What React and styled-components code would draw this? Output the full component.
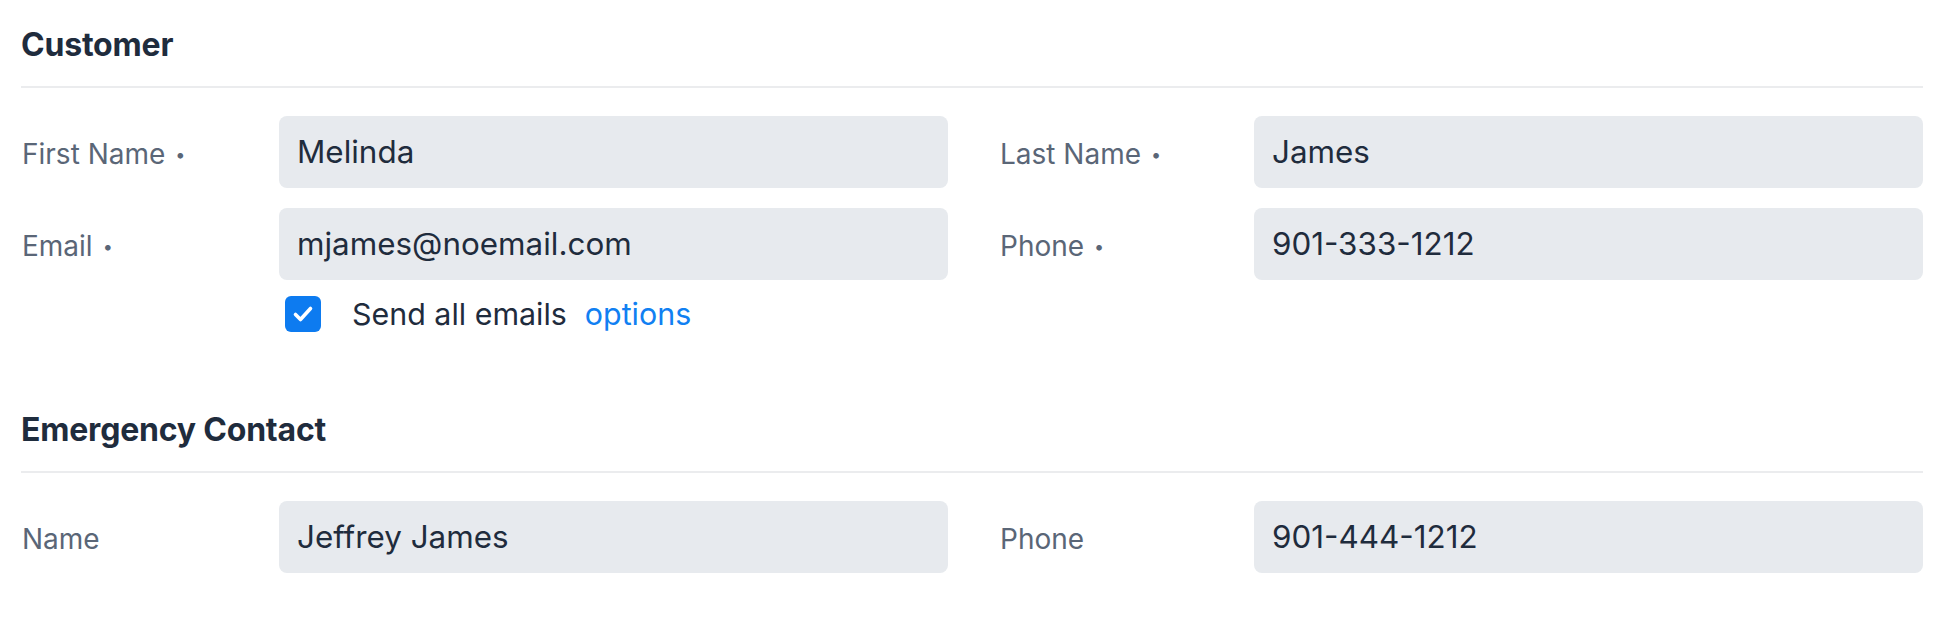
import React from "react";
import styled, { createGlobalStyle } from "styled-components";

const GlobalStyle = createGlobalStyle`
  html, body {
    margin: 0;
    padding: 0;
    background: #ffffff;
  }
  body {
    font-family: Inter, "Noto Sans", "Liberation Sans", sans-serif;
    -webkit-font-smoothing: antialiased;
  }
`;

const Page = styled.div`
  width: 1940px;
  height: 618px;
  box-sizing: border-box;
  padding: 25px 17px 0 21px;
  display: flex;
  flex-direction: column;
  gap: 78px;
  overflow: hidden;
`;

const Section = styled.section`
  display: flex;
  flex-direction: column;
`;

const Heading = styled.h2`
  margin: 0;
  font-size: 32px;
  line-height: 40px;
  font-weight: 700;
  color: #1f2c3d;
  letter-spacing: -0.2px;
`;

const Divider = styled.hr`
  margin: 21px 0 28px;
  border: none;
  height: 2px;
  background: #ebecee;
`;

const Rows = styled.div`
  display: flex;
  flex-direction: column;
  gap: 20px;
`;

const Row = styled.div`
  display: grid;
  grid-template-columns: 927fr 924fr;
  column-gap: 51px;
`;

const Field = styled.div`
  display: flex;
  align-items: center;
  min-width: 0;
`;

const Label = styled.label`
  flex: 0 0 ${(p) => p.$w || 258}px;
  box-sizing: border-box;
  font-size: 28px;
  line-height: 34px;
  padding-top: 4px;
  color: #5a6677;
  white-space: nowrap;
  padding-left: 1px;
`;

const Req = styled.span`
  display: inline-block;
  margin-left: 10px;
  font-size: 18px;
  vertical-align: 3px;
`;

const Input = styled.input`
  flex: 1 1 auto;
  min-width: 0;
  height: 72px;
  box-sizing: border-box;
  border: none;
  outline: none;
  border-radius: 8px;
  background: #e7eaee;
  padding: 0 18px;
  font-family: inherit;
  font-size: 31.4px;
  color: #1f2c3d;
`;

const OptionRow = styled.div`
  display: flex;
  align-items: center;
  margin-top: -4px;
  padding-left: 264px;
  height: 36px;
`;

const Check = styled.span`
  width: 36px;
  height: 36px;
  border-radius: 6px;
  background: #0d7bf0;
  display: flex;
  align-items: center;
  justify-content: center;
  flex-shrink: 0;
`;

const OptionText = styled.span`
  margin-left: 31px;
  font-size: 30.4px;
  line-height: 36px;
  color: #1f2c3d;
`;

const OptionLink = styled.a`
  margin-left: 18px;
  font-size: 30.4px;
  line-height: 36px;
  color: #1180f2;
  text-decoration: none;
  cursor: pointer;
`;

function Required() {
  return <Req>•</Req>;
}

export default function App() {
  return (
    <>
      <GlobalStyle />
      <Page>
        <Section>
          <Heading>Customer</Heading>
          <Divider />
          <Rows>
            <Row>
              <Field>
                <Label>First Name<Required /></Label>
                <Input readOnly value="Melinda" />
              </Field>
              <Field>
                <Label $w={255}>Last Name<Required /></Label>
                <Input readOnly value="James" />
              </Field>
            </Row>
            <Row>
              <Field>
                <Label>Email<Required /></Label>
                <Input readOnly value="mjames@noemail.com" />
              </Field>
              <Field>
                <Label $w={255}>Phone<Required /></Label>
                <Input readOnly value="901-333-1212" />
              </Field>
            </Row>
            <OptionRow>
              <Check>
                <svg width="36" height="36" viewBox="0 0 36 36" fill="none">
                  <path
                    d="M10.5 18.5 L15.5 23.5 L25.5 12.5"
                    stroke="#ffffff"
                    strokeWidth="3.6"
                    strokeLinecap="round"
                    strokeLinejoin="round"
                  />
                </svg>
              </Check>
              <OptionText>Send all emails</OptionText>
              <OptionLink>options</OptionLink>
            </OptionRow>
          </Rows>
        </Section>
        <Section>
          <Heading>Emergency Contact</Heading>
          <Divider />
          <Rows>
            <Row>
              <Field>
                <Label>Name</Label>
                <Input readOnly value="Jeffrey James" />
              </Field>
              <Field>
                <Label $w={255}>Phone</Label>
                <Input readOnly value="901-444-1212" />
              </Field>
            </Row>
          </Rows>
        </Section>
      </Page>
    </>
  );
}
